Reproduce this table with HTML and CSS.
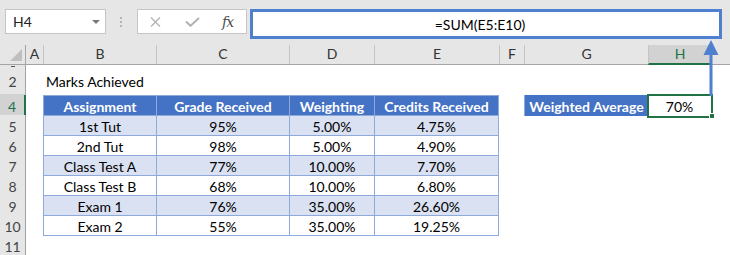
FILE: index.html
```html
<!DOCTYPE html>
<html>
<head>
<meta charset="utf-8">
<title>Weighted Average</title>
<link rel="stylesheet" href="styles.css">
</head>
<body>
<div class="app">
  <div class="toolbar">
    <div class="namebox"><span class="nb-text">H4</span><span class="dd"></span></div>
    <div class="grip"><i></i><i></i><i></i></div>
    <div class="fxbox">
      <svg class="ic-x" width="11" height="10" viewBox="0 0 11 10"><path d="M1 0.5 L10 9.5 M10 0.5 L1 9.5" stroke="#b3b3b3" stroke-width="1.4" fill="none"/></svg>
      <svg class="ic-ok" width="15" height="10" viewBox="0 0 15 10"><path d="M1 4.5 L5.5 8.8 L14 1" stroke="#b3b3b3" stroke-width="2" fill="none"/></svg>
      <span class="fx">fx</span>
    </div>
    <div class="formula">=SUM(E5:E10)</div>
  </div>

  <div class="sheet">
    <div class="row hdr">
      <div class="corner"><span class="tri"></span></div>
      <div class="ch cA">A</div>
      <div class="ch">B</div>
      <div class="ch">C</div>
      <div class="ch">D</div>
      <div class="ch">E</div>
      <div class="ch">F</div>
      <div class="ch">G</div>
      <div class="ch ch-sel">H</div>
      <div class="ch"></div>
    </div>

    <div class="row r1"><div class="rh"><span class="mark"></span></div></div>

    <div class="row r2"><div class="rh">2</div><div class="title">Marks Achieved</div></div>

    <div class="row">
      <div class="rh rh-sel">4</div>
      <div class="t th cB">Assignment</div>
      <div class="t th">Grade Received</div>
      <div class="t th">Weighting</div>
      <div class="t th te">Credits Received</div>
      <div class="wlabel">Weighted Average</div>
      <div class="wval">70%<span class="sel"></span><span class="fh"></span></div>
    </div>

    <div class="row band">
      <div class="rh">5</div>
      <div class="t cB">1st Tut</div><div class="t">95%</div><div class="t">5.00%</div><div class="t te">4.75%</div>
    </div>
    <div class="row">
      <div class="rh">6</div>
      <div class="t cB">2nd Tut</div><div class="t">98%</div><div class="t">5.00%</div><div class="t te">4.90%</div>
    </div>
    <div class="row band">
      <div class="rh">7</div>
      <div class="t cB">Class Test A</div><div class="t">77%</div><div class="t">10.00%</div><div class="t te">7.70%</div>
    </div>
    <div class="row">
      <div class="rh">8</div>
      <div class="t cB">Class Test B</div><div class="t">68%</div><div class="t">10.00%</div><div class="t te">6.80%</div>
    </div>
    <div class="row band">
      <div class="rh">9</div>
      <div class="t cB">Exam 1</div><div class="t">76%</div><div class="t">35.00%</div><div class="t te">26.60%</div>
    </div>
    <div class="row last">
      <div class="rh">10</div>
      <div class="t cB">Exam 2</div><div class="t">55%</div><div class="t">35.00%</div><div class="t te">19.25%</div>
    </div>
    <div class="row"><div class="rh">11</div></div>
  </div>

  <svg class="arrow" width="18" height="57" viewBox="0 0 18 57">
    <rect x="7.5" y="14" width="3" height="43" fill="#4f7fcf"/>
    <path d="M9 1 L16.5 16 L1.5 16 Z" fill="#4f7fcf"/>
  </svg>
</div>
</body>
</html>
```
FILE: styles.css
```css
* { box-sizing: border-box; }
html, body { margin: 0; padding: 0; }
body {
  width: 730px;
  height: 255px;
  overflow: hidden;
  background: #fff;
  font-family: Lato, "Open Sans", sans-serif;
  font-size: 14px;
  color: #000;
}
.app { position: relative; width: 730px; height: 255px; overflow: hidden; }

/* ---------- formula toolbar ---------- */
.toolbar {
  height: 45px;
  background: #e6e6e6;
  display: flex;
  align-items: flex-start;
  padding: 9px 0 0 5px;
}
.namebox {
  width: 101px;
  height: 25px;
  background: #fff;
  border: 1px solid #c6c6c6;
  display: flex;
  align-items: center;
  padding-left: 7px;
  color: #222;
}
.dd {
  margin-left: auto;
  margin-right: 5px;
  width: 0; height: 0;
  border-left: 4px solid transparent;
  border-right: 4px solid transparent;
  border-top: 4px solid #7a7a7a;
}
.grip {
  margin: 8px 0 0 14px;
  display: flex;
  flex-direction: column;
  gap: 2px;
}
.grip i { display: block; width: 2px; height: 2px; background: #b5b5b5; }
.fxbox {
  margin-left: 15px;
  width: 110px;
  height: 25px;
  background: #fff;
  border: 1px solid #c6c6c6;
  display: flex;
  align-items: center;
  padding-left: 12px;
}
.ic-ok { margin-left: 24px; }
.fx {
  margin-left: 22px;
  font-family: "DejaVu Serif", "Liberation Serif", serif;
  font-style: italic;
  font-size: 14px;
  color: #4d4d4d;
  letter-spacing: -1px;
}
.formula {
  margin-left: 3px;
  width: 472px;
  height: 30px;
  background: #fff;
  border: 3px solid #4f7fcf;
  display: flex;
  align-items: center;
  justify-content: center;
  padding-right: 12px;
  color: #000;
}

/* ---------- sheet grid ---------- */
.row {
  display: grid;
  grid-template-columns: 26px 17px 113px 133px 85px 125px 25px 124px 63px 1fr;
  height: 20px;
}
.r1 { height: 3px; }
.r2 { height: 27px; }

.hdr { background: #e6e6e6; border-bottom: 1px solid #a3a3a3; }
.corner {
  border-right: 1px solid #a3a3a3;
  display: flex;
  justify-content: flex-end;
  align-items: flex-end;
  padding: 0 3px 3px 0;
}
.tri {
  width: 0; height: 0;
  border-left: 12px solid transparent;
  border-bottom: 12px solid #bfbfbf;
}
.ch {
  border-left: 1px solid #c4c4c4;
  text-align: center;
  line-height: 17px;
  color: #333;
}
.cA { border-left: none; }
.ch-sel {
  background: #d2d2d2;
  color: #217346;
  border-bottom: 2px solid #217346;
  margin-bottom: -1px;
}

.rh {
  background: #e6e6e6;
  border-right: 1px solid #a3a3a3;
  border-bottom: 1px solid #d0d0d0;
  text-align: center;
  line-height: 17px;
  padding-top: 3px;
  color: #444;
}
.r1 .rh {
  padding: 1px 0 0 0;
  border-bottom: none;
  display: flex;
  justify-content: center;
}
.mark { display: block; width: 4px; height: 1px; background: #555; margin-left: 1px; }
.r2 .rh { padding-top: 5px; }
.rh-sel {
  background: #d2d2d2;
  color: #217346;
  border-right: 2px solid #217346;
}

.title {
  grid-column: 3;
  padding: 5px 0 0 3px;
  line-height: 17px;
  white-space: nowrap;
}

/* ---------- table ---------- */
.cB { grid-column: 3; }
.t {
  border-left: 1px solid #8eaadb;
  border-top: 1px solid #8eaadb;
  text-align: center;
  line-height: 17px;
  padding-top: 2px;
  white-space: nowrap;
}
.te { border-right: 1px solid #8eaadb; }
.last .t { border-bottom: 1px solid #8eaadb; }
.th { background: #4472c4; color: #fff; font-weight: 700; }
.band .t { background: #d9e1f2; }

.wlabel {
  grid-column: 8;
  background: #4472c4;
  color: #fff;
  font-weight: 700;
  text-align: center;
  line-height: 17px;
  padding-top: 3px;
  border-left: 1px solid #8eaadb;
  white-space: nowrap;
  overflow: hidden;
}
.wval {
  position: relative;
  text-align: center;
  line-height: 17px;
  padding-top: 3px;
}
.sel {
  position: absolute;
  left: -1px; top: -1px; right: -2px; bottom: -2px;
  border: 2px solid #217346;
}
.fh {
  position: absolute;
  right: -4px; bottom: -3px;
  width: 6px; height: 6px;
  background: #217346;
  border: 1px solid #fff;
}

.arrow { position: absolute; left: 702px; top: 39px; }
```
